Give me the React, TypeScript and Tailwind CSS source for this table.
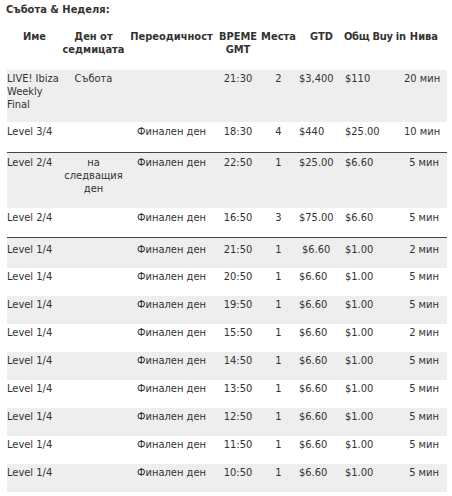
import React from 'react';

type Row = {
  name: React.ReactNode;
  day?: React.ReactNode;
  freq?: string;
  time: string;
  seats: string;
  gtd: string;
  buyIn: string;
  levels: string;
  gray?: boolean;
  h: string;
  pt: string;
  line?: boolean;
  gtdShift?: boolean;
};

const cols = 'grid grid-cols-[55px_63px_93px_40px_41px_45px_60px_43px]';

const levelRows: Row[] = [
  { name: 'Level 1/4', freq: 'Финален ден', time: '21:50', seats: '1', gtd: '$6.60', buyIn: '$1.00', levels: '2 мин', gray: true, h: 'h-[30px]', pt: 'pt-[5px]', gtdShift: true },
  { name: 'Level 1/4', freq: 'Финален ден', time: '20:50', seats: '1', gtd: '$6.60', buyIn: '$1.00', levels: '5 мин', h: 'h-[28px]', pt: 'pt-[2px]' },
  { name: 'Level 1/4', freq: 'Финален ден', time: '19:50', seats: '1', gtd: '$6.60', buyIn: '$1.00', levels: '5 мин', gray: true, h: 'h-[28px]', pt: 'pt-[2px]' },
  { name: 'Level 1/4', freq: 'Финален ден', time: '15:50', seats: '1', gtd: '$6.60', buyIn: '$1.00', levels: '2 мин', h: 'h-[28px]', pt: 'pt-[2px]' },
  { name: 'Level 1/4', freq: 'Финален ден', time: '14:50', seats: '1', gtd: '$6.60', buyIn: '$1.00', levels: '5 мин', gray: true, h: 'h-[28px]', pt: 'pt-[2px]' },
  { name: 'Level 1/4', freq: 'Финален ден', time: '13:50', seats: '1', gtd: '$6.60', buyIn: '$1.00', levels: '5 мин', h: 'h-[28px]', pt: 'pt-[2px]' },
  { name: 'Level 1/4', freq: 'Финален ден', time: '12:50', seats: '1', gtd: '$6.60', buyIn: '$1.00', levels: '5 мин', gray: true, h: 'h-[28px]', pt: 'pt-[2px]' },
  { name: 'Level 1/4', freq: 'Финален ден', time: '11:50', seats: '1', gtd: '$6.60', buyIn: '$1.00', levels: '5 мин', h: 'h-[28px]', pt: 'pt-[2px]' },
  { name: 'Level 1/4', freq: 'Финален ден', time: '10:50', seats: '1', gtd: '$6.60', buyIn: '$1.00', levels: '5 мин', gray: true, h: 'h-[28px]', pt: 'pt-[2px]' },
];

const rows: Row[] = [
  {
    name: (<>LIVE! Ibiza<br />Weekly<br />Final</>),
    day: 'Събота',
    time: '21:30', seats: '2', gtd: '$3,400', buyIn: '$110', levels: '20 мин',
    gray: true, h: 'h-[52px]', pt: 'pt-[2px]',
  },
  {
    name: 'Level 3/4', freq: 'Финален ден', time: '18:30', seats: '4', gtd: '$440', buyIn: '$25.00', levels: '10 мин',
    h: 'h-[31px]', pt: 'pt-[3px]', line: true,
  },
  {
    name: 'Level 2/4',
    day: (<>на<br />следващия<br />ден</>),
    freq: 'Финален ден', time: '22:50', seats: '1', gtd: '$25.00', buyIn: '$6.60', levels: '5 мин',
    gray: true, h: 'h-[55px]', pt: 'pt-[3px]',
  },
  {
    name: 'Level 2/4', freq: 'Финален ден', time: '16:50', seats: '3', gtd: '$75.00', buyIn: '$6.60', levels: '5 мин',
    h: 'h-[30px]', pt: 'pt-[3px]', line: true,
  },
  ...levelRows,
];

export default function App() {
  return (
    <div
      className="w-[452px] h-[496px] overflow-hidden bg-white text-[#333] text-[11px] leading-[13px]"
      style={{ fontFamily: "'DejaVu Sans Condensed', 'Liberation Sans', sans-serif" }}
    >
      <div className="h-[28px] pt-[3px] pl-[6px] font-bold">Събота &amp; Неделя:</div>

      <div className="ml-[7px] w-[440px]">
        {/* header */}
        <div className={`${cols} h-[42px] pt-[2px] font-bold text-center whitespace-nowrap`}>
          <div>Име</div>
          <div>Ден от<br />седмицата</div>
          <div>Переодичност</div>
          <div>ВРЕМЕ<br />GMT</div>
          <div>Места</div>
          <div>GTD</div>
          <div className="text-left tracking-[-0.3px]">Общ Buy in</div>
          <div className="text-right pr-[9px]">Нива</div>
        </div>

        {rows.map((r, i) => (
          <div
            key={i}
            className={`${cols} ${r.h} ${r.pt} ${r.gray ? 'bg-[#eeeeee]' : 'bg-white'} ${r.line ? 'border-b border-[#444]' : ''}`}
          >
            <div className="whitespace-nowrap">{r.name}</div>
            <div className="text-center whitespace-nowrap">{r.day}</div>
            <div className="text-center whitespace-nowrap">{r.freq}</div>
            <div className="text-center">{r.time}</div>
            <div className="text-center">{r.seats}</div>
            <div className={r.gtdShift ? 'pl-[3px]' : ''}>{r.gtd}</div>
            <div className="pl-[1px]">{r.buyIn}</div>
            <div className="text-right pr-[8px] whitespace-nowrap">{r.levels}</div>
          </div>
        ))}
      </div>
    </div>
  );
}
